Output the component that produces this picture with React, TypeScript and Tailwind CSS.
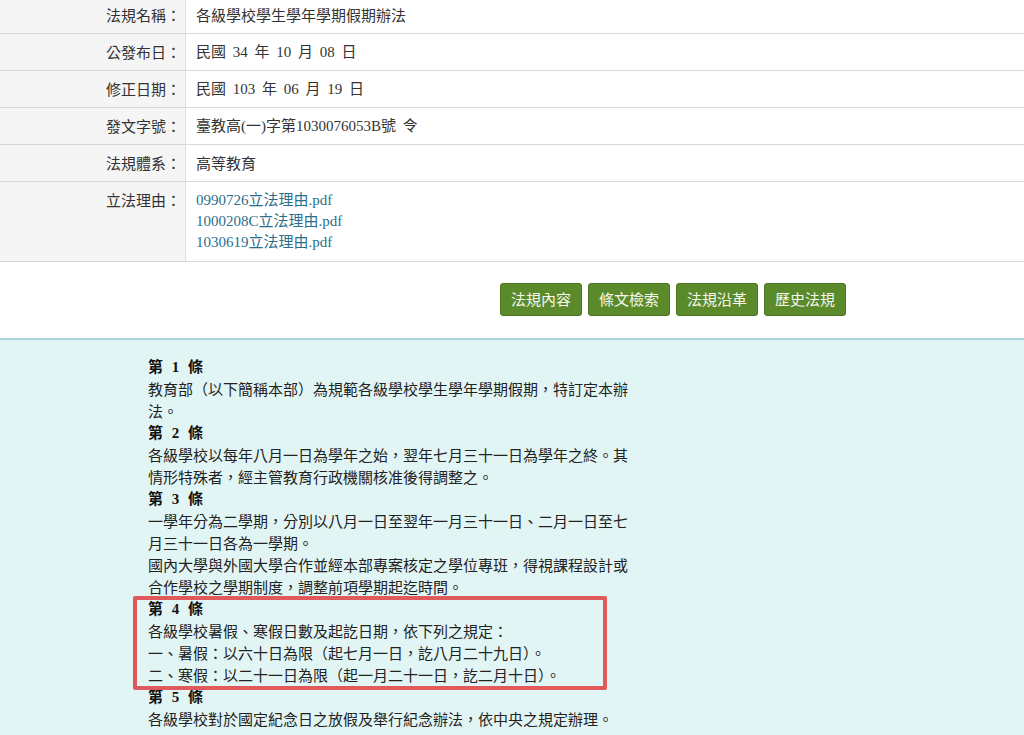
import React from 'react';

const sans = "font-['Noto_Sans_CJK_TC','Noto_Sans',sans-serif]";
const mixed = "font-['Liberation_Serif','Noto_Sans_CJK_TC',serif]";

interface Row {
    label: string;
    value: React.ReactNode;
    serif?: boolean;
}

const rows: Row[] = [
    { label: '法規名稱：', value: '各級學校學生學年學期假期辦法' },
    { label: '公發布日：', value: '民國 34 年 10 月 08 日', serif: true },
    { label: '修正日期：', value: '民國 103 年 06 月 19 日', serif: true },
    { label: '發文字號：', value: '臺教高(一)字第1030076053B號 令', serif: true },
    { label: '法規體系：', value: '高等教育' },
];

const files = ['0990726立法理由.pdf', '1000208C立法理由.pdf', '1030619立法理由.pdf'];

const buttons = ['法規內容', '條文檢索', '法規沿革', '歷史法規'];

type Line = { head?: boolean; text: string };

const articles: Line[] = [
    { head: true, text: '第 1 條' },
    { text: '教育部（以下簡稱本部）為規範各級學校學生學年學期假期，特訂定本辦法。' },
    { head: true, text: '第 2 條' },
    { text: '各級學校以每年八月一日為學年之始，翌年七月三十一日為學年之終。其情形特殊者，經主管教育行政機關核准後得調整之。' },
    { head: true, text: '第 3 條' },
    { text: '一學年分為二學期，分別以八月一日至翌年一月三十一日、二月一日至七月三十一日各為一學期。' },
    { text: '國內大學與外國大學合作並經本部專案核定之學位專班，得視課程設計或合作學校之學期制度，調整前項學期起迄時間。' },
    { head: true, text: '第 4 條' },
    { text: '各級學校暑假、寒假日數及起訖日期，依下列之規定：' },
    { text: '一、暑假：以六十日為限（起七月一日，訖八月二十九日）。' },
    { text: '二、寒假：以二十一日為限（起一月二十一日，訖二月十日）。' },
    { head: true, text: '第 5 條' },
    { text: '各級學校對於國定紀念日之放假及舉行紀念辦法，依中央之規定辦理。' },
];

export default function App() {
    return (
        <div className={`w-[1024px] h-[735px] overflow-hidden bg-white text-[#333] ${sans}`}>
            <div className="-mt-[3px]">
                {rows.map((row) => (
                    <div key={row.label} className="grid grid-cols-[186px_1fr] h-[37px] border-b border-[#d8d8d8]">
                        <div className="bg-[#f5f5f5] border-r border-[#dedede] flex items-center justify-end pr-[4px] text-[15px]">
                            {row.label}
                        </div>
                        <div
                            className={`flex items-center pl-[10px] text-[15px] ${row.serif ? `${mixed} [word-spacing:3px]` : ''}`}
                        >
                            {row.value}
                        </div>
                    </div>
                ))}
                <div className="grid grid-cols-[186px_1fr] h-[80px] border-b border-[#d8d8d8]">
                    <div className="bg-[#f5f5f5] border-r border-[#dedede] flex justify-end pr-[4px] pt-[7px] text-[15px] leading-[21px]">
                        立法理由：
                    </div>
                    <div className={`pl-[10px] pt-[8px] ${mixed} text-[15px] leading-[21px] text-[#2b6f8d]`}>
                        {files.map((f) => (
                            <div key={f}>{f}</div>
                        ))}
                    </div>
                </div>
            </div>

            <div className="h-[76px] flex items-start pt-[21px] pl-[500px] gap-[6px]">
                {buttons.map((b) => (
                    <button
                        key={b}
                        className="h-[33px] px-[10px] rounded-[3px] bg-[#5b8a2b] border border-[#4c7622] text-[15px] text-[#f4f8ee]"
                    >
                        {b}
                    </button>
                ))}
            </div>

            <div className="border-t-2 border-[#acd6d6] bg-[#e2f5f5] h-full pt-[16px] pl-[148px]">
                <div className="relative w-[482px] text-[15px] leading-[22px] text-[#222]">
                    {articles.map((line, i) =>
                        line.head ? (
                            <div key={i} className={`${mixed} font-bold text-[#111] [word-spacing:5px]`}>
                                {line.text}
                            </div>
                        ) : (
                            <div key={i}>{line.text}</div>
                        )
                    )}
                    <div className="absolute left-[-15px] top-[240px] w-[474px] h-[94px] border-4 border-[#e05a5c] rounded-[2px] pointer-events-none" />
                </div>
            </div>
        </div>
    );
}
